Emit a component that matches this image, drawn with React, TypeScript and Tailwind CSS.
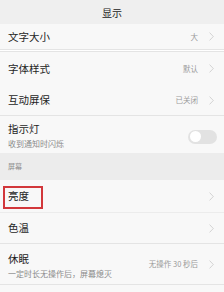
import React from "react";

const FONT = { fontFamily: '"Noto Sans CJK SC", "Noto Sans", sans-serif' };

function Chevron() {
  return (
    <svg width="5" height="9" viewBox="0 0 5 9" className="ml-[11px] shrink-0">
      <path d="M0.6 0.6 L4.3 4.5 L0.6 8.4" fill="none" stroke="#cfcfcf" strokeWidth="0.9" />
    </svg>
  );
}

function Row({
  title,
  sub,
  value,
  h,
  chevron = true,
  right,
}: {
  title: React.ReactNode;
  sub?: string;
  value?: string;
  h: string;
  chevron?: boolean;
  right?: React.ReactNode;
}) {
  return (
    <div className={`flex items-center pl-[8px] pr-[10px] bg-[#f8f8f8] ${h}`}>
      <div className={`flex-1 min-w-0 ${sub ? "pt-[3px]" : ""}`}>
        <div className="text-[10.5px] leading-[14px] text-[#1e1e1e]">{title}</div>
        {sub && <div className="text-[8px] leading-[12px] text-[#8a8a8a] mt-[2px]">{sub}</div>}
      </div>
      {value && <span className="text-[7.5px] text-[#9a9a9a]">{value}</span>}
      {right}
      {chevron && <Chevron />}
    </div>
  );
}

export default function App() {
  return (
    <div className="w-[224px] h-[292px] bg-[#f8f8f8] overflow-hidden" style={FONT}>
      <div className="h-[24px] bg-[#efefef] flex items-center justify-center text-[10px] text-[#222]">
        显示
      </div>
      <Row title="文字大小" value="大" h="h-[25px]" />
      <div className="h-[3px] border-y border-[#e4e4e4] bg-white" />
      <Row title="字体样式" value="默认" h="h-[33px]" />
      <Row title="互动屏保" value="已关闭" h="h-[30px]" />
      <div className="h-px bg-[#e4e4e4]" />
      <Row
        title="指示灯"
        sub="收到通知时闪烁"
        h="h-[37px]"
        chevron={false}
        right={
          <div className="w-[29px] h-[14px] rounded-full bg-[#e2e2e2] p-[1.5px] mr-[-3px] mt-[4px]">
            <div className="w-[11px] h-[11px] rounded-full bg-white" />
          </div>
        }
      />
      <div className="h-[27px] bg-[#ececec] flex items-center pl-[8px] text-[7px] text-[#8e8e8e]">
        屏幕
      </div>
      <div className="relative">
        <Row title="亮度" h="h-[32px]" />
        <div className="absolute left-[3px] top-[6px] w-[40px] h-[23px] border-2 border-[#d2373b]" />
      </div>
      <div className="h-px bg-[#ececec]" />
      <Row title="色温" h="h-[30px]" />
      <div className="h-px bg-[#e4e4e4]" />
      <Row title="休眠" sub="一定时长无操作后，屏幕熄灭" value="无操作 30 秒后" h="h-[40px]" />
      <div className="h-px bg-[#e4e4e4]" />
    </div>
  );
}
